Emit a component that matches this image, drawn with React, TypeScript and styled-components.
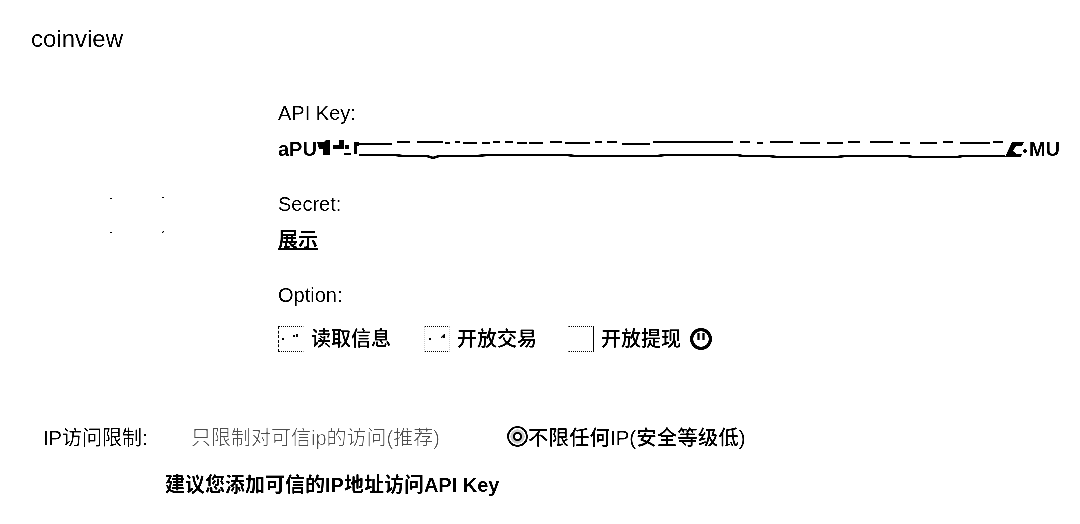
import React from 'react';
import styled, { createGlobalStyle } from 'styled-components';

const GlobalStyle = createGlobalStyle`
  html, body {
    margin: 0;
    padding: 0;
    background: #fff;
  }
  body {
    font-family: "Liberation Sans", "Noto Sans CJK SC", sans-serif;
    color: #111;
  }
`;

type Side = 'left' | 'right' | 'none';

const permissions: { label: string; solid: Side; marks: string }[] = [
  { label: '读取信息', solid: 'left', marks: 'M4 13h2M15 10h2M19 8v3' },
  { label: '开放交易', solid: 'none', marks: 'M5 13h2M17 12l4-4M20 9v3' },
  { label: '开放提现', solid: 'right', marks: '' },
];

// scribble over the key, start/end of each dash on the upper line
const upperDashes = [
  [41, 75], [80, 93], [100, 126], [128, 133], [138, 143], [146, 160], [165, 173], [176, 183],
  [188, 196], [200, 210], [212, 226], [233, 245], [248, 273], [278, 285], [290, 300], [305, 333],
  [336, 416], [423, 433], [440, 446], [453, 476], [483, 503], [510, 526], [531, 543], [553, 576],
  [583, 593], [603, 620], [626, 636], [643, 673], [676, 686],
];
const upperPath = upperDashes
  .map(([a, b], i) => `M${a} ${5 + (i % 5 === 0 ? 1 : 0) + (i % 3 === 0 ? 1 : 0)}H${b}`)
  .join('');
const lowerPath =
  'M42 18H78l8 1H110l6 2 6-2H160l10-1H250l8 1H340l8-1H420l6 1H452l8 1H520l8-1H590l6 1H640l6-1H688';

const App: React.FC = () => (
  <Page>
    <GlobalStyle />
    <Title>coinview</Title>
    <Main>
      <QrSlot>
        <svg width="56" height="38" viewBox="0 0 56 38">
          <path d="M1 3l2-1M53 1l2 1M1 36l2 1M53 37l2-2" stroke="#111" strokeWidth="1.2" fill="none" />
        </svg>
      </QrSlot>
      <Details>
        <Label>API Key:</Label>
        <KeyRow>
          aPU
          <Redaction width="712" height="24" viewBox="0 0 712 24">
            <path d="M0 5h7l2-2h4v15H6v-6H2zM16 8h6V3h5v9H16zM28 8h4v4h-4zM27 16h7v2h-7zM37 5h5v4h-2v8h-3z" fill="#111" />
            <path d={upperPath} fill="none" stroke="#111" strokeWidth="2.4" />
            <path d={lowerPath} fill="none" stroke="#111" strokeWidth="2.4" />
            <path d="M688 20l7-15h12l-2 4h-6l-3 5 4 3h5l-1 3z" fill="#111" />
            <circle cx="708" cy="14" r="2" fill="#111" />
          </Redaction>
          MU
        </KeyRow>
        <Label>Secret:</Label>
        <RevealLink href="#">展示</RevealLink>
        <Label>Option:</Label>
        <OptionRow>
          {permissions.map(p => (
            <Option key={p.label}>
              <CheckBox $solid={p.solid}>
                {p.marks && (
                  <svg width="26" height="26" viewBox="0 0 26 26">
                    <path d={p.marks} stroke="#111" strokeWidth="1.4" fill="none" />
                  </svg>
                )}
              </CheckBox>
              <OptionText>{p.label}</OptionText>
            </Option>
          ))}
          <InfoIcon width="24" height="24" viewBox="0 0 24 24">
            <circle cx="12" cy="12" r="9.4" fill="none" stroke="#111" strokeWidth="3.2" />
            <path d="M9.5 6v7M14.5 6v7" stroke="#111" strokeWidth="2.2" fill="none" />
          </InfoIcon>
        </OptionRow>
      </Details>
    </Main>
    <IpRow>
      <IpLabel>IP访问限制:</IpLabel>
      <FaintRadio />
      <FaintText>只限制对可信ip的访问(推荐)</FaintText>
      <CheckedRadio />
      <IpChoice>不限任何IP(安全等级低)</IpChoice>
    </IpRow>
    <Hint>建议您添加可信的IP地址访问API Key</Hint>
  </Page>
);

const Page = styled.div`
  width: 1080px;
  height: 524px;
  box-sizing: border-box;
  padding: 25px 0 0 31px;
  overflow: hidden;
  background: #fff;
  filter: contrast(3);
`;

const Title = styled.h1`
  margin: 0;
  font-size: 24px;
  font-weight: 400;
  line-height: 28px;
`;

const Main = styled.div`
  display: flex;
  margin-top: 48px;
`;

const QrSlot = styled.div`
  width: 247px;
  box-sizing: border-box;
  padding: 95px 0 0 78px;
`;

const Details = styled.div`
  flex: 1;
  min-width: 0;
`;

const Label = styled.div`
  font-size: 20px;
  line-height: 24px;
`;

const KeyRow = styled.div`
  display: flex;
  align-items: center;
  margin: 12px 0 31px;
  font-size: 20px;
  font-weight: 700;
  line-height: 24px;
`;

const Redaction = styled.svg`
  flex: none;
`;

const RevealLink = styled.a`
  display: block;
  width: max-content;
  margin: 12px 0 31px;
  color: #111;
  font-size: 20px;
  font-weight: 700;
  line-height: 24px;
  text-decoration: underline;
`;

const OptionRow = styled.div`
  display: flex;
  align-items: center;
  margin-top: 19px;
`;

const Option = styled.label`
  display: flex;
  align-items: center;
  margin-right: 33px;

  &:nth-child(2) {
    margin-right: 31px;
  }

  &:nth-child(3) {
    margin-right: 8px;
  }
`;

const CheckBox = styled.span<{ $solid: Side }>`
  display: block;
  box-sizing: border-box;
  width: 26px;
  height: 26px;
  margin-right: 7px;
  border-top: 1px dotted #222;
  border-bottom: 1px dotted #222;
  border-left: 1px ${p => (p.$solid === 'left' ? 'dashed #111' : p.$solid === 'none' ? 'dotted #999' : 'solid transparent')};
  border-right: 1px ${p => (p.$solid === 'right' ? 'solid #111' : p.$solid === 'none' ? 'dotted #999' : 'solid transparent')};

  svg {
    display: block;
    margin: -1px;
  }
`;

const OptionText = styled.span`
  font-size: 20px;
  font-weight: 500;
  line-height: 26px;
  -webkit-text-stroke: 0.15px #111;
`;

const InfoIcon = styled.svg`
  flex: none;
`;

const IpRow = styled.div`
  display: flex;
  align-items: center;
  margin: 71px 0 0 12px;
  height: 26px;
`;

const IpLabel = styled.span`
  width: 120px;
  font-size: 20px;
`;

const FaintRadio = styled.span`
  width: 20px;
  height: 20px;
  margin-right: 8px;
  border-radius: 50%;
  border-top: 1px dashed #aaa;
  box-sizing: border-box;
`;

const FaintText = styled.span`
  width: 316px;
  color: #6f6f6f;
  font-size: 20px;
`;

const CheckedRadio = styled.span`
  width: 21px;
  height: 21px;
  border-radius: 50%;
  border: 2px solid #111;
  box-sizing: border-box;
  background: radial-gradient(circle, #fff 0 2px, #444 3px 4px, #999 5px 7px, #fff 8px);
`;

const IpChoice = styled.span`
  font-size: 20.5px;
  font-weight: 500;
`;

const Hint = styled.div`
  margin: 23px 0 0 134px;
  font-size: 20px;
  font-weight: 700;
  line-height: 26px;
`;

export default App;
